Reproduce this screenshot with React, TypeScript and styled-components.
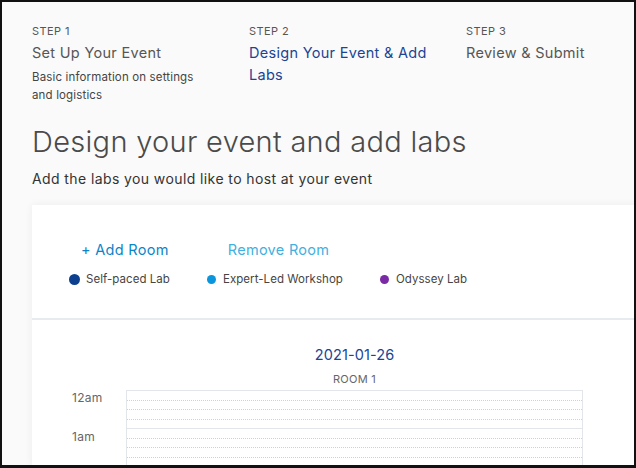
import { Fragment } from "react";
import styled, { createGlobalStyle } from "styled-components";

const GlobalStyle = createGlobalStyle`
  html, body {
    margin: 0;
    padding: 0;
  }
  body {
    font-family: Inter, "Noto Sans", "Liberation Sans", sans-serif;
    color: #565656;
    letter-spacing: 0.3px;
  }
`;

const Frame = styled.div`
  box-sizing: border-box;
  width: 636px;
  height: 468px;
  border: 2px solid #111;
  border-bottom-width: 3px;
  background: #fafafa;
  overflow: hidden;
  padding: 21px 0 0 30px;
`;

const Steps = styled.div`
  display: grid;
  grid-template-columns: 217px 217px 217px;
`;

const Step = styled.div`
  display: flex;
  flex-direction: column;
`;

const StepLabel = styled.div`
  font-size: 11px;
  line-height: 16px;
  letter-spacing: 0.4px;
  color: #565656;
`;

const StepTitle = styled.div<{ $active?: boolean }>`
  margin-top: 3px;
  font-size: 14.5px;
  line-height: 22px;
  color: ${(p) => (p.$active ? "#1a4594" : "#565656")};
  padding-right: 12px;
`;

const StepDesc = styled.div`
  margin-top: 4px;
  font-size: 11.5px;
  line-height: 18px;
  letter-spacing: 0.15px;
  color: #454545;
  padding-right: 40px;
`;

const Heading = styled.h1`
  margin: 20px 0 0;
  font-size: 29px;
  line-height: 36px;
  font-weight: 300;
  color: #4a4a4a;
`;

const Subtitle = styled.p`
  margin: 9px 0 0;
  font-size: 14px;
  line-height: 20px;
  letter-spacing: 0.4px;
  color: #333;
`;

const Card = styled.div`
  margin-top: 16px;
  width: 640px;
  background: #fff;
  box-shadow: 0 0 8px rgba(0, 0, 0, 0.06);
`;

const Controls = styled.div`
  padding: 26px 0 31px 37px;
  border-bottom: 2px solid #e8ebee;
`;

const ButtonRow = styled.div`
  display: flex;
  gap: 35px;
`;

const LinkButton = styled.button<{ $muted?: boolean }>`
  height: 36px;
  padding: 0 12px;
  border: none;
  background: none;
  font-family: inherit;
  font-size: 14.5px;
  letter-spacing: 0.3px;
  color: ${(p) => (p.$muted ? "#3fb0e0" : "#0a85c8")};
  cursor: pointer;
`;

const Legend = styled.div`
  display: flex;
  gap: 36px;
  margin-top: 4px;
`;

const LegendItem = styled.div`
  display: flex;
  align-items: center;
  gap: 6px;
  font-size: 11.5px;
  line-height: 16px;
  letter-spacing: 0.05px;
  color: #454545;
`;

const Dot = styled.span<{ $color: string; $size: number }>`
  display: inline-block;
  width: ${(p) => p.$size}px;
  height: ${(p) => p.$size}px;
  border-radius: 50%;
  background: ${(p) => p.$color};
  margin-left: ${(p) => (11 - p.$size) / 2}px;
  margin-right: ${(p) => (11 - p.$size) / 2}px;
`;

const Schedule = styled.div`
  padding-top: 25px;
  display: grid;
  grid-template-columns: 94px 457px;
`;

const DateTitle = styled.div`
  grid-column: 2;
  text-align: center;
  font-size: 14.5px;
  line-height: 20px;
  letter-spacing: 0.1px;
  color: #1a4594;
`;

const RoomTitle = styled.div`
  grid-column: 2;
  text-align: center;
  margin: 7px 0 4px;
  font-size: 11px;
  line-height: 14px;
  color: #666;
`;

const TimeLabel = styled.div`
  grid-column: 1;
  padding: 1px 0 0 40px;
  font-size: 12px;
  line-height: 14px;
  color: #666;
`;

const HourSlot = styled.div<{ $first?: boolean }>`
  grid-column: 2;
  box-sizing: border-box;
  height: ${(p) => (p.$first ? 39 : 38)}px;
  display: flex;
  flex-direction: column;
  border: 1px solid #e2e6ea;
  border-top-width: ${(p) => (p.$first ? 1 : 0)}px;
`;

const Quarter = styled.div`
  flex: 1;
  &:not(:last-child) {
    border-bottom: 1px dotted #cfd2d4;
  }
`;

const hours = ["12am", "1am"];

const legend = [
  { label: "Self-paced Lab", color: "#0d3f8f", size: 11 },
  { label: "Expert-Led Workshop", color: "#0a95dd", size: 9 },
  { label: "Odyssey Lab", color: "#7b2aa6", size: 9 },
];

export default function App() {
  return (
    <>
      <GlobalStyle />
      <Frame>
        <Steps>
          <Step>
            <StepLabel>STEP 1</StepLabel>
            <StepTitle>Set Up Your Event</StepTitle>
            <StepDesc>Basic information on settings and logistics</StepDesc>
          </Step>
          <Step>
            <StepLabel>STEP 2</StepLabel>
            <StepTitle $active>Design Your Event &amp; Add Labs</StepTitle>
          </Step>
          <Step>
            <StepLabel>STEP 3</StepLabel>
            <StepTitle>Review &amp; Submit</StepTitle>
          </Step>
        </Steps>

        <Heading>Design your event and add labs</Heading>
        <Subtitle>Add the labs you would like to host at your event</Subtitle>

        <Card>
          <Controls>
            <ButtonRow>
              <LinkButton>+ Add Room</LinkButton>
              <LinkButton $muted>Remove Room</LinkButton>
            </ButtonRow>
            <Legend>
              {legend.map((l) => (
                <LegendItem key={l.label}>
                  <Dot $color={l.color} $size={l.size} />
                  {l.label}
                </LegendItem>
              ))}
            </Legend>
          </Controls>

          <Schedule>
            <DateTitle>2021-01-26</DateTitle>
            <RoomTitle>ROOM 1</RoomTitle>
            {hours.map((h, i) => (
              <Fragment key={h}>
                <TimeLabel>{h}</TimeLabel>
                <HourSlot $first={i === 0}>
                  <Quarter />
                  <Quarter />
                  <Quarter />
                  <Quarter />
                </HourSlot>
              </Fragment>
            ))}
          </Schedule>
        </Card>
      </Frame>
    </>
  );
}
